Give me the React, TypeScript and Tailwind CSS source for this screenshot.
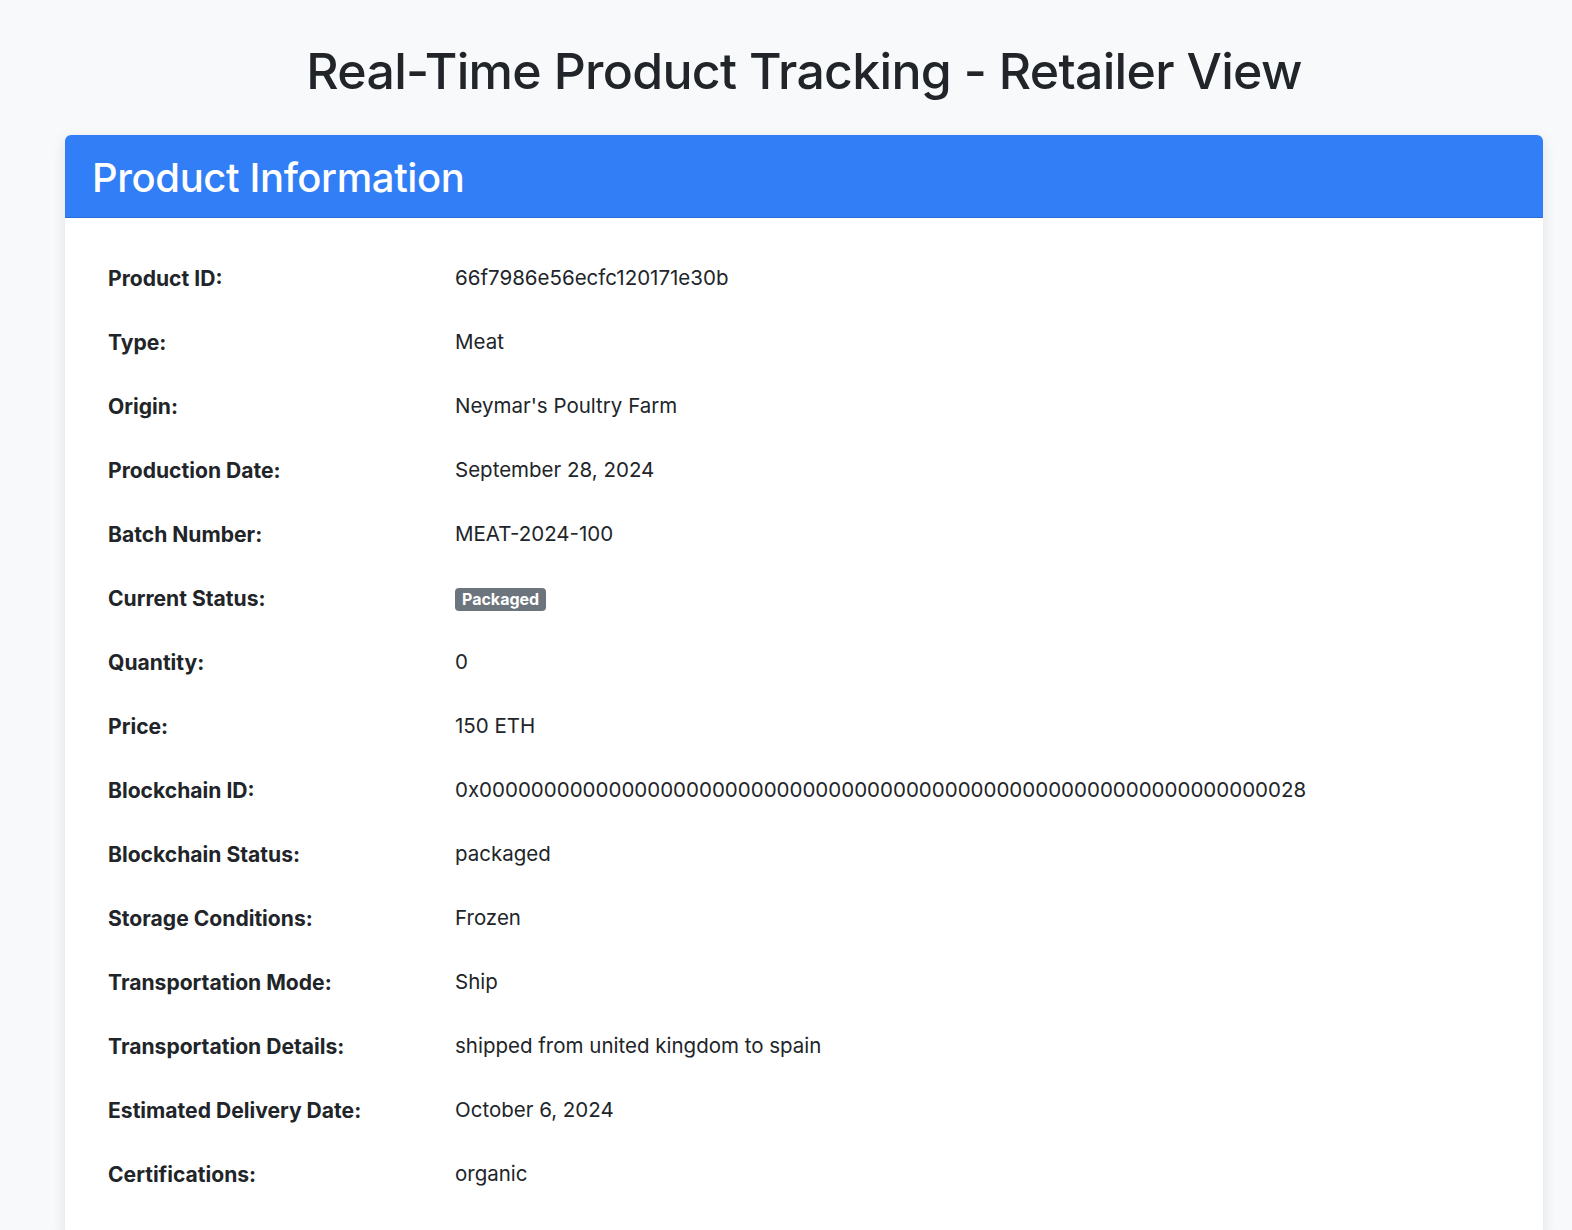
const rows: { label: string; value: string; badge?: boolean }[] = [
  { label: 'Product ID:', value: '66f7986e56ecfc120171e30b' },
  { label: 'Type:', value: 'Meat' },
  { label: 'Origin:', value: "Neymar's Poultry Farm" },
  { label: 'Production Date:', value: 'September 28, 2024' },
  { label: 'Batch Number:', value: 'MEAT-2024-100' },
  { label: 'Current Status:', value: 'Packaged', badge: true },
  { label: 'Quantity:', value: '0' },
  { label: 'Price:', value: '150 ETH' },
  { label: 'Blockchain ID:', value: '0x0000000000000000000000000000000000000000000000000000000000000028' },
  { label: 'Blockchain Status:', value: 'packaged' },
  { label: 'Storage Conditions:', value: 'Frozen' },
  { label: 'Transportation Mode:', value: 'Ship' },
  { label: 'Transportation Details:', value: 'shipped from united kingdom to spain' },
  { label: 'Estimated Delivery Date:', value: 'October 6, 2024' },
  { label: 'Certifications:', value: 'organic' },
]

function InfoRow({ label, value, badge }: { label: string; value: string; badge?: boolean }) {
  return (
    <div className="flex h-[64px] items-center pt-[1px]">
      <div className="w-[347px] shrink-0 text-[21.1px] font-bold">{label}</div>
      <div className="text-[20.5px]">
        {badge ? (
          <span className="inline-flex h-[23px] items-center rounded-[4px] bg-[#6c757d] px-[7px] text-[16px] font-bold text-white">
            {value}
          </span>
        ) : (
          value
        )}
      </div>
    </div>
  )
}

export default function App() {
  return (
    <div className="min-h-screen bg-[#f8f9fa] pl-[65px] pr-[29px] text-[#212529] [font-family:Inter,'Noto_Sans',sans-serif]">
      <h1 className="flex h-[135px] items-center justify-center pt-[8px] text-[50px] font-medium tracking-[-0.7px]">
        Real-Time Product Tracking - Retailer View
      </h1>

      <div className="overflow-hidden rounded-[6px] bg-white shadow-[0_4px_14px_rgba(0,0,0,0.1)]">
        <div className="flex h-[83px] items-center border-b border-[#2a6fd6] bg-[#317ef6] px-[27px] pt-[3px]">
          <h2 className="text-[40px] font-medium tracking-[-0.4px] text-white">Product Information</h2>
        </div>
        <div className="px-[43px] pb-[30px] pt-[28px]">
          {rows.map((r) => (
            <InfoRow key={r.label} {...r} />
          ))}
        </div>
      </div>
    </div>
  )
}
